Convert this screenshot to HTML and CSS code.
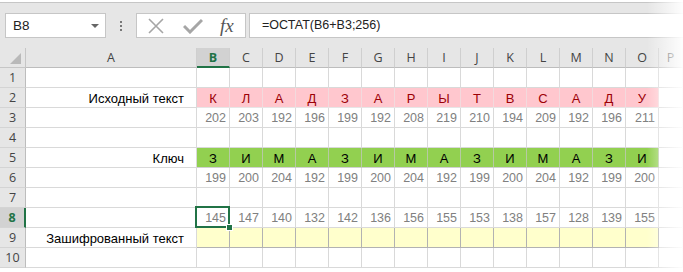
FILE: index.html
```html
<!DOCTYPE html>
<html lang="ru">
<head>
    <meta charset="UTF-8">
    <title>Шифр</title>
    <link rel="stylesheet" href="styles.css">
</head>
<body>

    <div class="window">
        <!-- Name box and formula bar -->
        <div class="toolbar">
            <div class="namebox">
                <span>B8</span>
                <span class="drop"></span>
            </div>
            <div class="dots"><i></i><i></i><i></i></div>
            <div class="fxbox">
                <svg class="icon" width="18" height="16" viewBox="0 0 18 16">
                    <path d="M2 1 L16 15 M16 1 L2 15" stroke="#a6a6a6" stroke-width="1.6" fill="none"/>
                </svg>
                <svg class="icon" width="20" height="16" viewBox="0 0 20 16">
                    <path d="M1 8 L7 14 L19 2" stroke="#a6a6a6" stroke-width="3" fill="none"/>
                </svg>
                <span class="fx">fx</span>
            </div>
            <div class="formula">=ОСТАТ(B6+B3;256)</div>
        </div>

        <!-- Worksheet grid, filled in below -->
        <div class="sheet" id="sheet"></div>

        <div class="fade"></div>
    </div>

    <script>
        const letters = ['A', 'B', 'C', 'D', 'E', 'F', 'G', 'H', 'I', 'J', 'K', 'L', 'M', 'N', 'O', 'P'];

        const rows = {
            2: { label: 'Исходный текст', kind: 'bad', values: ['К', 'Л', 'А', 'Д', 'З', 'А', 'Р', 'Ы', 'Т', 'В', 'С', 'А', 'Д', 'У'] },
            3: { kind: 'num', values: [202, 203, 192, 196, 199, 192, 208, 219, 210, 194, 209, 192, 196, 211] },
            5: { label: 'Ключ', kind: 'good', values: ['З', 'И', 'М', 'А', 'З', 'И', 'М', 'А', 'З', 'И', 'М', 'А', 'З', 'И'] },
            6: { kind: 'num', values: [199, 200, 204, 192, 199, 200, 204, 192, 199, 200, 204, 192, 199, 200] },
            8: { kind: 'num', values: [145, 147, 140, 132, 142, 136, 156, 155, 153, 138, 157, 128, 139, 155] },
            9: { label: 'Зашифрованный текст', kind: 'note', values: Array(14).fill('') }
        };

        const sheet = document.getElementById('sheet');

        function addCell(className, text) {
            const cell = document.createElement('div');
            cell.className = className;
            cell.textContent = text;
            sheet.appendChild(cell);
            return cell;
        }

        // column headers
        const corner = addCell('corner', '');
        corner.innerHTML = '<span class="tri"></span>';
        letters.forEach(letter => {
            addCell(letter === 'B' ? 'ch active' : 'ch', letter);
        });

        for (let r = 1; r <= 10; r++) {
            const row = rows[r] || { values: [] };
            addCell(r === 8 ? 'rh active' : 'rh', r);
            addCell('cell label', row.label || '');

            for (let c = 0; c < 14; c++) {
                const value = row.values[c];
                const kind = value === undefined ? '' : row.kind;
                const cell = addCell('cell ' + kind, value === undefined ? '' : value);
                if (r === 8 && c === 0) {
                    cell.innerHTML += '<span class="select"><span class="handle"></span></span>';
                }
            }
            addCell('cell', '');
        }
    </script>

</body>
</html>
```

FILE: styles.css
```css
body {
    margin: 0;
    padding: 0;
    background-color: white;
    font-family: "Liberation Sans", Arial, sans-serif;
}
.window {
    position: relative;
    width: 683px;
    height: 272px;
    overflow: hidden;
    padding-top: 2px;
    box-sizing: border-box;
}
.toolbar {
    display: flex;
    align-items: flex-start;
    height: 46px;
    box-sizing: border-box;
    padding: 10px 0 0 5px;
    background-color: #e6e6e6;
    border-top: 1px solid #c6c6c6;
}
.namebox {
    display: flex;
    align-items: center;
    justify-content: space-between;
    width: 101px;
    height: 25px;
    box-sizing: border-box;
    padding: 0 6px 0 7px;
    background-color: white;
    border: 1px solid #c6c6c6;
    font-size: 13.5px;
    color: #222;
}
.drop {
    width: 0;
    height: 0;
    border-left: 4px solid transparent;
    border-right: 4px solid transparent;
    border-top: 4px solid #666;
}
.dots {
    display: flex;
    flex-direction: column;
    gap: 2px;
    margin: 8px 14px 0 14px;
}
.dots i {
    display: block;
    width: 2px;
    height: 2px;
    background-color: #777;
}
.fxbox {
    display: flex;
    align-items: center;
    width: 110px;
    height: 25px;
    box-sizing: border-box;
    padding-left: 10px;
    gap: 18px;
    background-color: white;
    border: 1px solid #c6c6c6;
}
.fx {
    font-family: "Liberation Serif", serif;
    font-style: italic;
    font-size: 19px;
    color: #555;
    margin-left: -1px;
}
.formula {
    flex: 1;
    height: 25px;
    box-sizing: border-box;
    margin-left: 3px;
    padding: 4px 0 0 12px;
    background-color: white;
    border: 1px solid #c6c6c6;
    border-right: none;
    font-size: 12.5px;
    color: #222;
}
.sheet {
    display: grid;
    grid-template-columns: 26px 171px repeat(14, 33px) 1fr;
    grid-auto-rows: 20px;
}
.corner,
.ch,
.rh {
    display: flex;
    align-items: center;
    justify-content: center;
    box-sizing: border-box;
    background-color: #e6e6e6;
    color: #444;
    font-family: "Open Sans", sans-serif;
    font-size: 12.5px;
}
.corner {
    position: relative;
    border-right: 1px solid #c6c6c6;
    border-bottom: 1px solid #c6c6c6;
}
.tri {
    position: absolute;
    right: 4px;
    bottom: 3px;
    width: 0;
    height: 0;
    border-left: 11px solid transparent;
    border-bottom: 11px solid #b9b9b9;
}
.ch {
    border-right: 1px solid #cfcfcf;
    border-bottom: 1px solid #bdbdbd;
}
.ch.active {
    background-color: #d2d2d2;
    color: #217346;
    font-weight: bold;
    border-bottom: 2px solid #217346;
}
.rh {
    border-right: 1px solid #bdbdbd;
    border-bottom: 1px solid #d4d4d4;
}
.rh.active {
    background-color: #d2d2d2;
    color: #217346;
    font-weight: bold;
    border-right: 2px solid #217346;
}
.cell {
    position: relative;
    display: flex;
    align-items: center;
    justify-content: flex-end;
    box-sizing: border-box;
    padding: 1px 3px 0 3px;
    border-right: 1px solid #d9d9d9;
    border-bottom: 1px solid #d9d9d9;
    font-size: 13px;
    color: #000;
}
.label {
    padding-right: 12px;
}
.num {
    color: #808080;
    font-size: 12.5px;
}
.bad {
    justify-content: center;
    background-color: #ffc7ce;
    color: #9c0006;
    border-right-color: #f2dadd;
    border-bottom-color: #e6e6e6;
}
.good {
    justify-content: center;
    background-color: #92d050;
    border-right-color: #b7c9a4;
    border-bottom-color: #d0d0d0;
}
.note {
    background-color: #ffffcc;
    border-right-color: #b2b2b2;
    border-bottom-color: #b2b2b2;
}
.select {
    position: absolute;
    z-index: 2;
    left: -2px;
    top: -2px;
    right: -1px;
    bottom: -1px;
    border: 2px solid #217346;
}
.handle {
    position: absolute;
    right: -5px;
    bottom: -5px;
    width: 5px;
    height: 5px;
    background-color: #217346;
    border: 1px solid white;
}
.fade {
    position: absolute;
    z-index: 3;
    top: 0;
    right: 0;
    width: 36px;
    height: 100%;
    background: linear-gradient(to right, rgba(255, 255, 255, 0), rgba(255, 255, 255, 0.95));
}
```
